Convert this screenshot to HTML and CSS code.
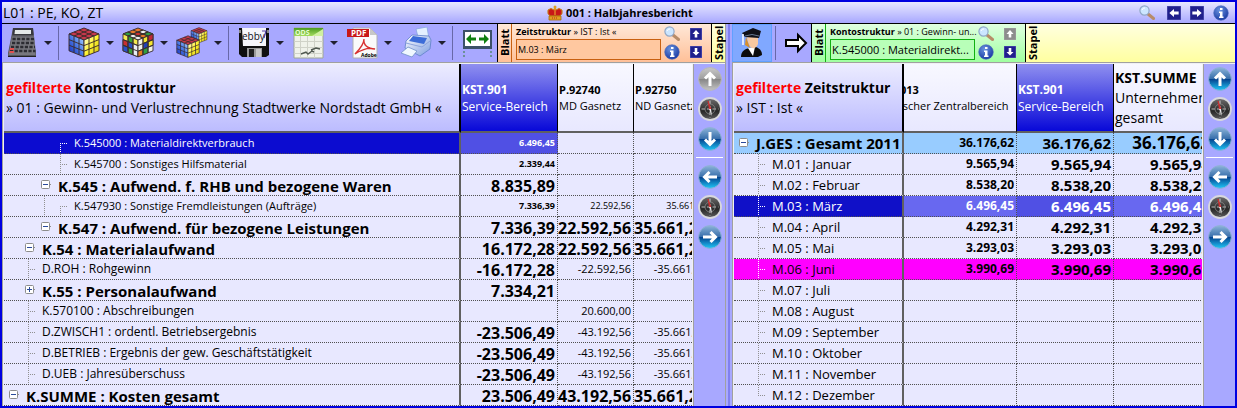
FILE: index.html
```html
<!DOCTYPE html>
<html lang="de">
<head>
<meta charset="utf-8">
<title>001 : Halbjahresbericht</title>
<link rel="stylesheet" href="styles.css">
</head>
<body>
<svg class="sprite" aria-hidden="true">
  <defs>
    <linearGradient id="blueFace" x1="1" y1="0" x2="0" y2="1"><stop offset="0" stop-color="#9cc8ff"/><stop offset=".5" stop-color="#4878e8"/><stop offset="1" stop-color="#1c38c0"/></linearGradient>
    <linearGradient id="yellowFace" x1="0" y1="0" x2="1" y2="1"><stop offset="0" stop-color="#fffcc0"/><stop offset=".5" stop-color="#fff430"/><stop offset="1" stop-color="#d8c818"/></linearGradient>
    <linearGradient id="ballBlue" x1="0" y1="0" x2="0" y2="1"><stop offset="0" stop-color="#8cb4d8"/><stop offset=".48" stop-color="#3a70ac"/><stop offset=".5" stop-color="#04408c"/><stop offset="1" stop-color="#20c8f8"/></linearGradient>
    <linearGradient id="ballGray" x1="0" y1="0" x2="0" y2="1"><stop offset="0" stop-color="#c8c8c8"/><stop offset=".48" stop-color="#a0a0a0"/><stop offset=".5" stop-color="#848484"/><stop offset="1" stop-color="#c4c4c4"/></linearGradient>
    <linearGradient id="dial" x1="0" y1="0" x2="0" y2="1"><stop offset="0" stop-color="#707070"/><stop offset=".6" stop-color="#282828"/><stop offset="1" stop-color="#606060"/></linearGradient>
    <linearGradient id="odsHead" x1="0" y1="0" x2="0" y2="1"><stop offset="0" stop-color="#4c9c20"/><stop offset="1" stop-color="#a4dc60"/></linearGradient>
    <linearGradient id="print" x1="0" y1="0" x2="1" y2="1"><stop offset="0" stop-color="#ffffff"/><stop offset="1" stop-color="#7c9ce0"/></linearGradient>
    <radialGradient id="infoBall" cx=".4" cy=".3" r=".7"><stop offset="0" stop-color="#6a94e0"/><stop offset="1" stop-color="#1c3ca4"/></radialGradient>
  </defs>

  <symbol id="g-full" viewBox="0 0 16 20"><path class="dots" d="M8.5 0V20"/></symbol>
  <symbol id="g-tee" viewBox="0 0 16 20"><path class="dots" d="M8.5 0V20M8 10.5H16"/></symbol>
  <symbol id="g-start" viewBox="0 0 16 20"><path class="dots" d="M8.5 10V20M8 10.5H16"/></symbol>
  <symbol id="g-end" viewBox="0 0 16 20"><path class="dots" d="M8.5 0V10M8 10.5H16"/></symbol>
  <symbol id="g-minus" viewBox="0 0 16 20"><rect x="5.5" y="5.5" width="8" height="8" rx="1" fill="#fff" stroke="#8c8c8c"/><path d="M7 9.5H12" stroke="#2a4a9c"/><path class="dots" d="M14 9.5H16"/></symbol>
  <symbol id="g-plus" viewBox="0 0 16 20"><rect x="5.5" y="5.5" width="8" height="8" rx="1" fill="#fff" stroke="#8c8c8c"/><path d="M7 9.5H12M9.5 7V12" stroke="#2a4a9c"/><path class="dots" d="M14 9.5H16"/></symbol>

  <symbol id="i-calc" viewBox="0 0 32 32">
    <path d="M7 1H27L30 26V30H2V26Z" fill="#55555c"/><path d="M7 1H27L27.500 8H6.500Z" fill="#38383e"/><path d="M9 3H25V7H8.500Z" fill="#e4e8e8"/>
    <path d="M6 9.500H28L29.500 28H2.500Z" fill="#77777e"/>
    <path d="M6.500 12H28M6 16H28.500M5 20H29M4 24H29.500" stroke="#2c2c32" stroke-width="2.400" stroke-dasharray="3.200 1.400"/>
    <path d="M4 22H8M3.500 25H8" stroke="#e05050" stroke-width="2"/><path d="M2 29.500H30" stroke="#222"/>
  </symbol>
  <symbol id="i-cube" viewBox="0 0 32 32">
    <g stroke="#3a2a2a" stroke-width=".16">
      <g transform="matrix(5 -2 5 2 1 7)"><path fill="#c8384c" d="M0 0H3V3H0Z"/><path fill="none" d="M1 0V3M2 0V3M0 1H3M0 2H3"/></g>
      <g transform="matrix(5 2 0 5.600 1 7)"><path fill="url(#blueFace)" d="M0 0H3V3H0Z"/><path fill="none" d="M1 0V3M2 0V3M0 1H3M0 2H3"/></g>
      <g transform="matrix(5 -2 0 5.600 16 13)"><path fill="url(#yellowFace)" d="M0 0H3V3H0Z"/><path fill="none" d="M1 0V3M2 0V3M0 1H3M0 2H3"/></g>
    </g>
  </symbol>
  <symbol id="i-mixed" viewBox="0 0 32 32">
    <g stroke="#3a3030" stroke-width=".16">
      <g transform="matrix(5 -2 5 2 1 7)"><path fill="#e87828" d="M0 0H3V3H0Z"/><path fill="#f0f0f0" d="M0 1H1V3H0ZM2 1H3V2H2Z"/><path fill="#30a040" d="M0 0H1V1H0ZM2 2H3V3H2Z"/><path fill="#d03030" d="M1 1H2V2H1Z"/><path fill="none" d="M1 0V3M2 0V3M0 1H3M0 2H3"/></g>
      <g transform="matrix(5 2 0 5.600 1 7)"><path fill="#f4e850" d="M0 0H3V3H0Z"/><path fill="#c83030" d="M0 1H1V2H0Z"/><path fill="#38a038" d="M1 0H2V1H1ZM1 2H2V3H1Z"/><path fill="#2850c8" d="M1 1H2V2H1ZM0 2H1V3H0Z"/><path fill="#e8ecf4" d="M2 1H3V3H2Z"/><path fill="none" d="M1 0V3M2 0V3M0 1H3M0 2H3"/></g>
      <g transform="matrix(5 -2 0 5.600 16 13)"><path fill="#f0f0e8" d="M0 0H3V3H0Z"/><path fill="#f4e430" d="M1 0H2V1H1ZM2 1H3V2H2Z"/><path fill="#2040b8" d="M1 1H2V2H1Z"/><path fill="#c02838" d="M2 0H3V1H2Z"/><path fill="#e87c20" d="M0 2H1V3H0Z"/><path fill="#30a040" d="M1 2H2V3H1Z"/><path fill="none" d="M1 0V3M2 0V3M0 1H3M0 2H3"/></g>
    </g>
  </symbol>
  <symbol id="i-cubes" viewBox="0 0 32 32">
    <svg x="14" y="0" width="18" height="17"><use href="#i-cube"/></svg>
    <svg x="0" y="8" width="24" height="24"><use href="#i-cube"/></svg>
  </symbol>
  <symbol id="i-print" viewBox="0 0 32 32">
    <path d="M16 2L27 0L29 12L19 14Z" fill="#e4f0ff" stroke="#88a8e0" stroke-width=".8"/>
    <path d="M6 14L12 8L29 9L31 13L30 22L20 29L5 21Z" fill="url(#print)" stroke="#6080c8" stroke-width=".8"/>
    <path d="M9 14L13 9L27 11L24 17Z" fill="#3c6cd8"/><path d="M6 16L22 20L30 14" fill="none" stroke="#8ca4dc"/>
    <path d="M1 26L8 20L17 24L12 30Z" fill="#f0f8ff" stroke="#7090c8" stroke-width=".8"/>
  </symbol>
  <symbol id="i-fit" viewBox="0 0 32 32">
    <path d="M2 4H29V20H2Z" fill="#fff" stroke="#3c5068" stroke-width="2"/><path d="M1 20.500H30" stroke="#3c5068" stroke-width="3"/>
    <path d="M4 12L9 7V10.500H14V13.500H9V17ZM27 12L22 7V10.500H17V13.500H22V17Z" fill="#108010"/>
    <path d="M2 24V32M29 24V32" stroke="#6c9098" stroke-width="2" stroke-dasharray="2 2"/>
  </symbol>
  <symbol id="i-user" viewBox="0 0 32 32">
    <path d="M5 30C5 24 9 22 13 21L20 20C25 22 26 25 26 28L22 30Z" fill="#0c0c0c"/><path d="M12 21L19 20L17 29Z" fill="#fff"/>
    <path d="M11 10H22L22 17Q20 22 16 21Q12 19 11 10Z" fill="#f8c8a0"/><path d="M10 10L14 21L9 18Z" fill="#d8902c"/>
    <path d="M6 6L17 1L25 4L23 11L9 10Z" fill="#101018"/><path d="M7 7V18" stroke="#fff" stroke-width="1.500"/><path d="M9 9Q16 6 23 9" stroke="#687890" fill="none"/>
  </symbol>
  <symbol id="i-next" viewBox="0 0 24 24"><path d="M2 9H14V4L22 12L14 20V15H2Z" fill="#fff" stroke="#000" stroke-width="2"/></symbol>
  <symbol id="i-crown" viewBox="0 0 16 16">
    <path d="M1 5Q4 2 7 5L8 1L9 5Q12 2 15 5Q16 9 13 11H3Q0 9 1 5Z" fill="#c81818" stroke="#c88818"/><path d="M2 11H14V15H2Z" fill="#e0a020" stroke="#a86c10" stroke-width=".8"/><path d="M8 1V10" stroke="#f0b830"/><circle cx="8" cy="2" r="1.500" fill="#e0a020"/><path d="M5 13H11" stroke="#c02020" stroke-dasharray="1 1"/>
  </symbol>
  <symbol id="i-zoom" viewBox="0 0 16 16"><path d="M9 9L14.500 13.500" stroke="#b88c68" stroke-width="3" stroke-linecap="round"/><circle cx="5.500" cy="5.500" r="4.600" fill="#cce6ff" stroke="#90a8c8" stroke-width="1.200"/><path d="M3 5Q4 2.500 6 3" stroke="#fff" fill="none"/></symbol>
  <symbol id="i-info" viewBox="0 0 16 16"><circle cx="8" cy="8" r="7.300" fill="url(#infoBall)" stroke="#4868b8" stroke-width=".6"/><path d="M7 3H9.500V5H7ZM6 6.500H9.500V11.500H10.500V13H6V11.500H7V8H6Z" fill="#fff"/></symbol>
  <symbol id="i-sq-up" viewBox="0 0 12 12"><path class="plate" d="M0 0H12V12H0Z"/><path d="M6 2L9.500 6H7.300V9.500H4.700V6H2.500Z" fill="#fff"/></symbol>
  <symbol id="i-sq-down" viewBox="0 0 12 12"><path class="plate" d="M0 0H12V12H0Z"/><path d="M6 9.500L9.500 6H7.300V2H4.700V6H2.500Z" fill="#fff"/></symbol>
  <symbol id="i-sq-left" viewBox="0 0 12 12"><path class="plate" d="M0 0H12V12H0Z"/><path d="M2 6L6 2.500V4.700H10V7.300H6V9.500Z" fill="#fff"/></symbol>
  <symbol id="i-sq-right" viewBox="0 0 12 12"><path class="plate" d="M0 0H12V12H0Z"/><path d="M10 6L6 2.500V4.700H2V7.300H6V9.500Z" fill="#fff"/></symbol>
  <symbol id="n-up" viewBox="0 0 24 24"><circle cx="12" cy="12" r="11.400" class="ball"/><path class="shaft" d="M12 19V7M7 11.500L12 6.500L17 11.500"/></symbol>
  <symbol id="n-down" viewBox="0 0 24 24"><circle cx="12" cy="12" r="11.400" class="ball"/><path class="shaft" d="M12 5V17M7 12.500L12 17.500L17 12.500"/></symbol>
  <symbol id="n-left" viewBox="0 0 24 24"><circle cx="12" cy="12" r="11.400" class="ball"/><path class="shaft" d="M19 12H7M11.500 7L6.500 12L11.500 17"/></symbol>
  <symbol id="n-right" viewBox="0 0 24 24"><circle cx="12" cy="12" r="11.400" class="ball"/><path class="shaft" d="M5 12H17M12.500 7L17.500 12L12.500 17"/></symbol>
  <symbol id="n-compass" viewBox="0 0 24 24"><circle cx="12" cy="12" r="11" fill="url(#dial)" stroke="#d8d8dc" stroke-width="1.800"/><path d="M12 3.500V20.500M3.500 12H20.500" stroke="#b8b8b8" stroke-width="1.200" stroke-dasharray="3.500 2"/><circle cx="12" cy="12" r="5" fill="none" stroke="#909090" stroke-width=".7"/><path d="M10 4L13 12L11.500 12.500Z" fill="#e03030" stroke="#c83030" stroke-width=".8"/><path d="M11 12L14 19L13 12Z" fill="#eee"/></symbol>
</svg>

<div class="app">
  <header class="titlebar">
    <span class="context">L01 : PE, KO, ZT</span>
    <h1 class="title"><svg class="ico16"><use href="#i-crown"/></svg>001 : Halbjahresbericht</h1>
    <div class="title-tools">
      <button aria-label="Suchen"><svg class="ico16"><use href="#i-zoom"/></svg></button>
      <button aria-label="Zurück"><svg class="ico14"><use href="#i-sq-left"/></svg></button>
      <button aria-label="Vor"><svg class="ico14"><use href="#i-sq-right"/></svg></button>
      <button aria-label="Info"><svg class="ico16"><use href="#i-info"/></svg></button>
    </div>
  </header>

  <main class="workspace">
    <section class="pane">
      <div class="toolbar">
        <div class="tools">
          <button class="tool" aria-label="Rechner"><svg class="ico32"><use href="#i-calc"/></svg><i class="caret"></i></button>
          <span class="sep"></span>
          <button class="tool" aria-label="Würfel"><svg class="ico32"><use href="#i-cube"/></svg><i class="caret"></i></button>
          <button class="tool" aria-label="Würfel drehen"><svg class="ico32"><use href="#i-mixed"/></svg><i class="caret"></i></button>
          <button class="tool" aria-label="Würfel kopieren"><svg class="ico32"><use href="#i-cubes"/></svg><i class="caret"></i></button>
          <span class="sep"></span>
          <button class="tool" aria-label="Speichern">
            <svg class="ico32" viewBox="0 0 32 32">
              <path d="M1 1H31V28L28 30H4L1 27Z" fill="#101010"/><path d="M4 1H28V19H5Z" fill="#f6f6fa"/><path d="M2 3V6M30 3V6" stroke="#fff"/>
              <text x="4" y="13" class="ink-ebby">ebby</text><path d="M24 4H28L26 11" fill="none" stroke="#5040a0" stroke-width="1.200"/>
              <path d="M9 21H24V30H9Z" fill="#9a9a9a"/><path d="M11 22H16V30H11Z" fill="#202020"/><path d="M18 22H23V30H18Z" fill="#c8c8c8"/>
            </svg><i class="caret"></i></button>
          <button class="tool" aria-label="ODS-Export">
            <svg class="ico32" viewBox="0 0 32 32">
              <path d="M2 1H31V31H2Z" fill="#f0f2ea" stroke="#a0a894"/><path d="M2 1H31V9H2Z" fill="url(#odsHead)"/><path d="M20 9L31 2V9Z" fill="#d0f0a0"/>
              <text x="3" y="8" class="ink-ods">ODS</text>
              <path d="M2 14.500H31M2 20.500H31M2 26.500H31M8.500 9V31M15.500 9V31M22.500 9V31" stroke="#d0d2c8"/>
              <path d="M9 27L14 25L16 27L20 24L22 25M19 23L24 21L28 22" fill="none" stroke="#505850" stroke-width="1.400"/>
            </svg><i class="caret"></i></button>
          <button class="tool" aria-label="PDF-Export">
            <svg class="ico32" viewBox="0 0 32 32">
              <path d="M7 1H24L31 8V31H7Z" fill="#fafafa" stroke="#b0b0b0"/><path d="M24 1V8H31Z" fill="#c8c8c8"/>
              <path d="M1 2H23V10H1Z" fill="#c81818"/><text x="5" y="9" class="ink-pdf">PDF</text>
              <path d="M9 27C14 22 18 17 18 12C17 18 22 22 29 22C22 20 15 23 9 27Z" fill="none" stroke="#d83030" stroke-width="1.400"/>
              <text x="15" y="30" class="ink-adobe">Adobe</text>
            </svg><i class="caret"></i></button>
          <button class="tool" aria-label="Drucken"><svg class="ico32"><use href="#i-print"/></svg><i class="caret"></i></button>
          <span class="sep"></span>
          <button class="plain" aria-label="Spaltenbreite"><svg class="ico32"><use href="#i-fit"/></svg></button>
        </div>
        <div class="sheet orange">
          <span class="side">Blatt</span>
          <div class="sheet-main">
            <label for="zeit"><b>Zeitstruktur</b> » IST : Ist «</label>
            <input id="zeit" class="small" value="M.03 : März" readonly>
          </div>
          <div class="sheet-tools">
            <button aria-label="Suchen"><svg class="ico16"><use href="#i-zoom"/></svg></button>
            <button aria-label="Hoch"><svg class="ico12"><use href="#i-sq-up"/></svg></button>
            <button aria-label="Info"><svg class="ico16"><use href="#i-info"/></svg></button>
            <button aria-label="Runter"><svg class="ico12"><use href="#i-sq-down"/></svg></button>
          </div>
        </div>
        <div class="stack"><span class="side">Stapel</span></div>
      </div>
      <div class="panel">
        <div class="table-clip">
          <table class="grid accounts">
            <colgroup><col><col class="w97"><col class="w76"><col class="w76"></colgroup>
            <thead>
              <tr>
                <th class="name"><div class="h-big"><em>gefilterte</em> Kontostruktur</div><div class="h-sub">» 01 : Gewinn- und Verlustrechnung Stadtwerke Nordstadt GmbH «</div></th>
                <th class="cur"><div class="h-mid">KST.901</div><div class="h-text">Service-Bereich</div></th>
                <th><div class="h-small">P.92740</div><div class="h-stext">MD Gasnetz</div></th>
                <th><div class="h-small">P.92750</div><div class="h-stext">ND Gasnetz</div></th>
              </tr>
            </thead>
            <tbody>
              <tr class="picked"><td class="name"><div class="tree t-s"><i></i><i></i><i></i><svg><use href="#g-start"/></svg><span>K.545000 : Materialdirektverbrauch</span></div></td><td class="n-xsb">6.496,45</td><td></td><td></td></tr>
              <tr><td class="name"><div class="tree t-s"><i></i><i></i><i></i><svg><use href="#g-tee"/></svg><span>K.545700 : Sonstiges Hilfsmaterial</span></div></td><td class="n-xsb">2.339,44</td><td></td><td></td></tr>
              <tr><td class="name"><div class="tree t-b"><i></i><i></i><button aria-label="Einklappen"><svg><use href="#g-minus"/></svg></button><span>K.545 : Aufwend. f. RHB und bezogene Waren</span></div></td><td class="n-b">8.835,89</td><td></td><td></td></tr>
              <tr><td class="name"><div class="tree t-s"><i></i><i></i><svg><use href="#g-full"/></svg><svg><use href="#g-start"/></svg><span>K.547930 : Sonstige Fremdleistungen (Aufträge)</span></div></td><td class="n-xsb">7.336,39</td><td class="n-xs">22.592,56</td><td class="n-xs">35.661,23</td></tr>
              <tr><td class="name"><div class="tree t-b"><i></i><i></i><button aria-label="Einklappen"><svg><use href="#g-minus"/></svg></button><span>K.547 : Aufwend. für bezogene Leistungen</span></div></td><td class="n-b">7.336,39</td><td class="n-b">22.592,56</td><td class="n-b">35.661,23</td></tr>
              <tr><td class="name"><div class="tree t-b"><i></i><button aria-label="Einklappen"><svg><use href="#g-minus"/></svg></button><span>K.54 : Materialaufwand</span></div></td><td class="n-b">16.172,28</td><td class="n-b">22.592,56</td><td class="n-b">35.661,23</td></tr>
              <tr><td class="name"><div class="tree t-m"><i></i><svg><use href="#g-tee"/></svg><span>D.ROH : Rohgewinn</span></div></td><td class="n-b">-16.172,28</td><td class="n-s">-22.592,56</td><td class="n-s">-35.661,23</td></tr>
              <tr><td class="name"><div class="tree t-b"><i></i><button aria-label="Ausklappen"><svg><use href="#g-plus"/></svg></button><span>K.55 : Personalaufwand</span></div></td><td class="n-b">7.334,21</td><td></td><td></td></tr>
              <tr><td class="name"><div class="tree t-m"><i></i><svg><use href="#g-tee"/></svg><span>K.570100 : Abschreibungen</span></div></td><td></td><td class="n-s">20.600,00</td><td></td></tr>
              <tr><td class="name"><div class="tree t-m"><i></i><svg><use href="#g-tee"/></svg><span>D.ZWISCH1 : ordentl. Betriebsergebnis</span></div></td><td class="n-b">-23.506,49</td><td class="n-s">-43.192,56</td><td class="n-s">-35.661,23</td></tr>
              <tr><td class="name"><div class="tree t-m"><i></i><svg><use href="#g-tee"/></svg><span>D.BETRIEB : Ergebnis der gew. Geschäftstätigkeit</span></div></td><td class="n-b">-23.506,49</td><td class="n-s">-43.192,56</td><td class="n-s">-35.661,23</td></tr>
              <tr><td class="name"><div class="tree t-m"><i></i><svg><use href="#g-tee"/></svg><span>D.UEB : Jahresüberschuss</span></div></td><td class="n-b">-23.506,49</td><td class="n-s">-43.192,56</td><td class="n-s">-35.661,23</td></tr>
              <tr><td class="name"><div class="tree t-b"><button aria-label="Einklappen"><svg><use href="#g-minus"/></svg></button><span>K.SUMME : Kosten gesamt</span></div></td><td class="n-b">23.506,49</td><td class="n-b">43.192,56</td><td class="n-b">35.661,23</td></tr>
            </tbody>
          </table>
        </div>
        <nav class="pager">
          <button class="off" aria-label="Nach oben" disabled><svg><use href="#n-up"/></svg></button>
          <button aria-label="Position vertikal"><svg><use href="#n-compass"/></svg></button>
          <button aria-label="Nach unten"><svg><use href="#n-down"/></svg></button>
          <hr>
          <button aria-label="Nach links"><svg><use href="#n-left"/></svg></button>
          <button aria-label="Position horizontal"><svg><use href="#n-compass"/></svg></button>
          <button aria-label="Nach rechts"><svg><use href="#n-right"/></svg></button>
        </nav>
      </div>
    </section>

    <div class="splitter"></div>

    <section class="pane">
      <div class="toolbar">
        <button class="user" aria-label="Benutzer"><svg class="ico32"><use href="#i-user"/></svg></button>
        <span class="sep"></span>
        <button class="plain" aria-label="Weiter"><svg class="ico24"><use href="#i-next"/></svg></button>
        <div class="sheet green">
          <span class="side">Blatt</span>
          <div class="sheet-main">
            <label for="konto"><b>Kontostruktur</b> » 01 : Gewinn- un...</label>
            <input id="konto" value="K.545000 : Materialdirekt..." readonly>
          </div>
          <div class="sheet-tools">
            <button aria-label="Suchen"><svg class="ico16"><use href="#i-zoom"/></svg></button>
            <button class="off" aria-label="Hoch" disabled><svg class="ico12"><use href="#i-sq-up"/></svg></button>
            <button aria-label="Info"><svg class="ico16"><use href="#i-info"/></svg></button>
            <button aria-label="Runter"><svg class="ico12"><use href="#i-sq-down"/></svg></button>
          </div>
        </div>
        <div class="stack wide"><span class="side">Stapel</span></div>
      </div>
      <div class="panel">
        <div class="table-clip">
          <table class="grid periods">
            <colgroup><col><col class="w113"><col class="w97"><col class="w99"></colgroup>
            <thead>
              <tr>
                <th class="name"><div class="h-big"><em>gefilterte</em> Zeitstruktur</div><div class="h-sub">» IST : Ist «</div></th>
                <th class="cut"><div class="h-small">013</div><div class="h-stext">ischer Zentralbereich</div></th>
                <th class="cur"><div class="h-mid">KST.901</div><div class="h-text">Service-Bereich</div></th>
                <th><div class="h-big">KST.SUMME</div><div class="h-sub">Unternehmen</div><div class="h-sub">gesamt</div></th>
              </tr>
            </thead>
            <tbody>
              <tr class="total"><td class="name"><div class="tree t-b"><button aria-label="Einklappen"><svg><use href="#g-minus"/></svg></button><span>J.GES : Gesamt 2011</span></div></td><td class="n-m">36.176,62</td><td class="n-l">36.176,62</td><td class="n-xl">36.176,62</td></tr>
              <tr><td class="name"><div class="tree t-m"><i></i><svg><use href="#g-tee"/></svg><span>M.01 : Januar</span></div></td><td class="n-m">9.565,94</td><td class="n-l">9.565,94</td><td class="n-l">9.565,94</td></tr>
              <tr><td class="name"><div class="tree t-m"><i></i><svg><use href="#g-tee"/></svg><span>M.02 : Februar</span></div></td><td class="n-m">8.538,20</td><td class="n-l">8.538,20</td><td class="n-l">8.538,20</td></tr>
              <tr class="picked wide"><td class="name"><div class="tree t-m"><i></i><svg><use href="#g-tee"/></svg><span>M.03 : März</span></div></td><td class="n-m">6.496,45</td><td class="n-l">6.496,45</td><td class="n-l">6.496,45</td></tr>
              <tr><td class="name"><div class="tree t-m"><i></i><svg><use href="#g-tee"/></svg><span>M.04 : April</span></div></td><td class="n-m">4.292,31</td><td class="n-l">4.292,31</td><td class="n-l">4.292,31</td></tr>
              <tr><td class="name"><div class="tree t-m"><i></i><svg><use href="#g-tee"/></svg><span>M.05 : Mai</span></div></td><td class="n-m">3.293,03</td><td class="n-l">3.293,03</td><td class="n-l">3.293,03</td></tr>
              <tr class="mark"><td class="name"><div class="tree t-m"><i></i><svg><use href="#g-tee"/></svg><span>M.06 : Juni</span></div></td><td class="n-m">3.990,69</td><td class="n-l">3.990,69</td><td class="n-l">3.990,69</td></tr>
              <tr><td class="name"><div class="tree t-m"><i></i><svg><use href="#g-tee"/></svg><span>M.07 : Juli</span></div></td><td></td><td></td><td></td></tr>
              <tr><td class="name"><div class="tree t-m"><i></i><svg><use href="#g-tee"/></svg><span>M.08 : August</span></div></td><td></td><td></td><td></td></tr>
              <tr><td class="name"><div class="tree t-m"><i></i><svg><use href="#g-tee"/></svg><span>M.09 : September</span></div></td><td></td><td></td><td></td></tr>
              <tr><td class="name"><div class="tree t-m"><i></i><svg><use href="#g-tee"/></svg><span>M.10 : Oktober</span></div></td><td></td><td></td><td></td></tr>
              <tr><td class="name"><div class="tree t-m"><i></i><svg><use href="#g-tee"/></svg><span>M.11 : November</span></div></td><td></td><td></td><td></td></tr>
              <tr><td class="name"><div class="tree t-m"><i></i><svg><use href="#g-end"/></svg><span>M.12 : Dezember</span></div></td><td></td><td></td><td></td></tr>
            </tbody>
          </table>
        </div>
        <nav class="pager">
          <button aria-label="Nach oben"><svg><use href="#n-up"/></svg></button>
          <button aria-label="Position vertikal"><svg><use href="#n-compass"/></svg></button>
          <button aria-label="Nach unten"><svg><use href="#n-down"/></svg></button>
          <hr>
          <button aria-label="Nach links"><svg><use href="#n-left"/></svg></button>
          <button aria-label="Position horizontal"><svg><use href="#n-compass"/></svg></button>
          <button aria-label="Nach rechts"><svg><use href="#n-right"/></svg></button>
        </nav>
      </div>
    </section>
  </main>
</div>
</body>
</html>
```
FILE: styles.css
```css
* { box-sizing: border-box; }
body { margin: 0; font-family: "Open Sans", "Noto Sans", sans-serif; font-size: 12px; color: #000; }
button { margin: 0; padding: 0; border: 0; background: none; font: inherit; color: inherit; display: block; }
svg { display: block; }
.sprite { position: absolute; width: 0; height: 0; }

.ico12 { width: 12px; height: 12px; }
.ico14 { width: 14px; height: 14px; }
.ico16 { width: 16px; height: 16px; }
.ico24 { width: 24px; height: 24px; }
.ico32 { width: 32px; height: 32px; }
.plate { fill: var(--plate, #20208c); stroke: var(--plate-edge, #5858b8); }
.dots { fill: none; stroke: var(--dots, #909090); stroke-dasharray: 1 1; }
.shaft { fill: none; stroke: #fff; stroke-width: 3px; }
.ball { fill: var(--ball, url(#ballBlue)); stroke: var(--rim, #90b0d8); stroke-width: 1px; }
.off { --plate: #8c8c8c; --plate-edge: #a0a0a0; --ball: url(#ballGray); --rim: #b8b8b8; }
.ink-ebby { font: 10px "Open Sans", sans-serif; fill: #101020; }
.ink-ods { font: bold 7px "Open Sans", sans-serif; fill: #e8ffd0; }
.ink-pdf { font: bold 8px "Open Sans", sans-serif; fill: #fff; }
.ink-adobe { font: bold 5px "Open Sans", sans-serif; fill: #000; }

.app { border: 2px solid #0000e0; background: #a8a8ff; overflow: hidden; }

.titlebar { display: grid; grid-template-columns: 1fr auto 1fr; align-items: center; height: 22px; padding: 0 6px 0 1px; border-bottom: 1px solid #000; background: linear-gradient(#e8e8ff, #a8a8ff); }
.context { font-size: 14px; line-height: 20px; }
.title { display: flex; align-items: center; gap: 3px; margin: 0; padding-left: 8px; font-size: 11px; line-height: 20px; }
.title-tools { display: flex; align-items: center; justify-content: flex-end; gap: 9px; }
.title-tools button:first-child { margin-right: 3px; }

.workspace { display: grid; grid-template-columns: minmax(0, 723fr) 7px minmax(0, 503fr); }
.splitter { border-left: 1px solid #a0a0a0; background: linear-gradient(90deg, #a8a8ff 33%, #8080f0 33%, #8080f0 67%, #a8a8ff 67%); }

.toolbar { display: flex; height: 38px; align-items: stretch; }
.tools { display: flex; flex: 1; align-items: center; min-width: 0; padding-left: 4px; }
.tool { display: flex; align-items: center; }
.tool + .tool { margin-left: 2px; }
.caret { width: 20px; display: flex; justify-content: center; }
.caret::after { content: ""; border: 4px solid transparent; border-top-color: #202030; border-bottom: 0; }
.sep { width: 1px; height: 34px; margin: 0 9px 0 0; align-self: center; background: #6868a8; }
.user { padding: 2px 3px; border: 1px solid #60a0ff; background: #80a8ff; }
.user + .sep { margin: 0 8px 0 3px; }
.toolbar > .plain { margin-right: 3px; }
.plain svg { flex: none; }

.sheet { display: flex; flex: none; width: 214px; border-left: 1px solid #000; }
.sheet.orange { background: linear-gradient(#ffe8d8, #ffc098); --line: #c86010; --box: #ffc8a0; }
.sheet.green { background: linear-gradient(#e0ffe0, #a0ffa0); --line: #10b010; --box: #b8ffb8; }
.side { writing-mode: vertical-rl; transform: rotate(180deg); width: 14px; font-size: 11px; font-weight: bold; line-height: 14px; text-align: center; }
.sheet .side { border-left: 1px solid var(--line); }
.sheet-main { display: flex; flex: 1; flex-direction: column; min-width: 0; padding: 1px 3px 2px 4px; }
.sheet-main label { font-size: 9px; line-height: 14px; white-space: nowrap; }
.sheet-main input { width: 100%; height: 21px; padding: 0 1px; border: 1px solid var(--line); background: var(--box); font: 11px "Open Sans", "Noto Sans", sans-serif; color: #000; }
.sheet-main input.small { font-size: 9px; }
.sheet-tools { display: grid; grid-template-columns: 16px 12px; gap: 2px 10px; align-content: center; align-items: center; padding-right: 9px; }
.stack { flex: none; width: 14px; border-left: 1px solid #000; background: linear-gradient(#ffffe0, #ffffa0); display: flex; }
.stack.wide { flex: 1; width: auto; }

.panel { display: flex; align-items: stretch; padding: 1px 0 0 1px; border: solid #a0a0a0; border-width: 1px 0 0 1px; background: #f0f0f4; }
.table-clip { flex: 1; min-width: 0; overflow: hidden; margin-right: 1px; }
.grid { table-layout: fixed; border-collapse: separate; border-spacing: 0; }
.accounts { width: calc(100% + 18px); }
.periods { width: calc(100% + 11px); }
.w76 { width: 76px; }
.w97 { width: 97px; }
.w99 { width: 99px; }
.w113 { width: 113px; }

th { height: 69px; padding: 0 1px; text-align: left; font-weight: normal; white-space: nowrap; overflow: hidden; border-right: 1px solid #000; border-bottom: 2px solid #606060; background: linear-gradient(#f8f8ff, #e8e8ff); }
th.name { padding-left: 2px; border-right: 2px solid #000; background: linear-gradient(#ececff, #bcbcff); }
th.cur { color: #fff; background: linear-gradient(#9090f0, #0808d8); }
th.cut { padding: 0; }
th.cut div { margin-left: -4px; }
em { font-style: normal; color: #f00; }
.h-big { font-size: 14px; line-height: 20px; font-weight: bold; }
.h-sub { font-size: 14px; line-height: 20px; }
.h-mid { font-size: 12px; line-height: 17px; font-weight: bold; }
.h-text { font-size: 12px; line-height: 17px; }
.h-small { font-size: 11px; line-height: 16px; font-weight: bold; }
.h-stext { font-size: 11px; line-height: 16px; }

td { height: 21px; padding: 0 2px 0 0; line-height: 20px; text-align: right; white-space: nowrap; border-right: 1px dotted #505050; border-bottom: 1px dotted #505050; background: #e8e8ff; }
td.name { padding: 0; text-align: left; border-right: 2px solid #606060; overflow: hidden; }
.tree { display: flex; height: 20px; }
.tree i { width: 16px; flex: none; }
.tree svg { width: 16px; height: 20px; flex: none; }
.tree span { padding-left: 6px; }
.t-s { font-size: 11px; }
.t-m { font-size: 12px; }
.periods .t-m { font-size: 13px; }
.t-b { font-size: 15px; font-weight: bold; }
.accounts .t-b span { padding-top: 1px; }
.n-xs { font-size: 9px; }
.n-xsb { font-size: 9px; font-weight: bold; }
.n-s { font-size: 11px; }
.n-m { font-size: 12px; font-weight: bold; }
.n-l { font-size: 15px; font-weight: bold; }
.n-b { padding-top: 2px; font-size: 16px; line-height: 18px; font-weight: bold; }
.n-xl { font-size: 17px; font-weight: bold; }

.picked td.name { background: #0c0cd0; color: #fff; }
.picked td.name + td { background: #5050e4; color: #fff; }
.picked.wide td { background: #6868f0; color: #fff; }
.picked.wide td.name { background: #1010c8; }
.picked.wide td:nth-child(3) { background: #5050e4; }
.picked.wide td.name + td { background: #6868f0; }
.picked, .mark { --dots: #fff; }
.total td { background: #98ccff; }
.mark td { background: #f0f; }

.pager { display: flex; flex: none; flex-direction: column; align-items: center; gap: 6px; width: 32px; padding-top: 3px; border: solid #a0a0a0; border-width: 0 0 0 1px; background: #a8a8ff; }
.pager svg { width: 24px; height: 24px; }
.pager hr { width: 27px; height: 1px; margin: 0 0 1px; border: 0; background: #fff; }
```
